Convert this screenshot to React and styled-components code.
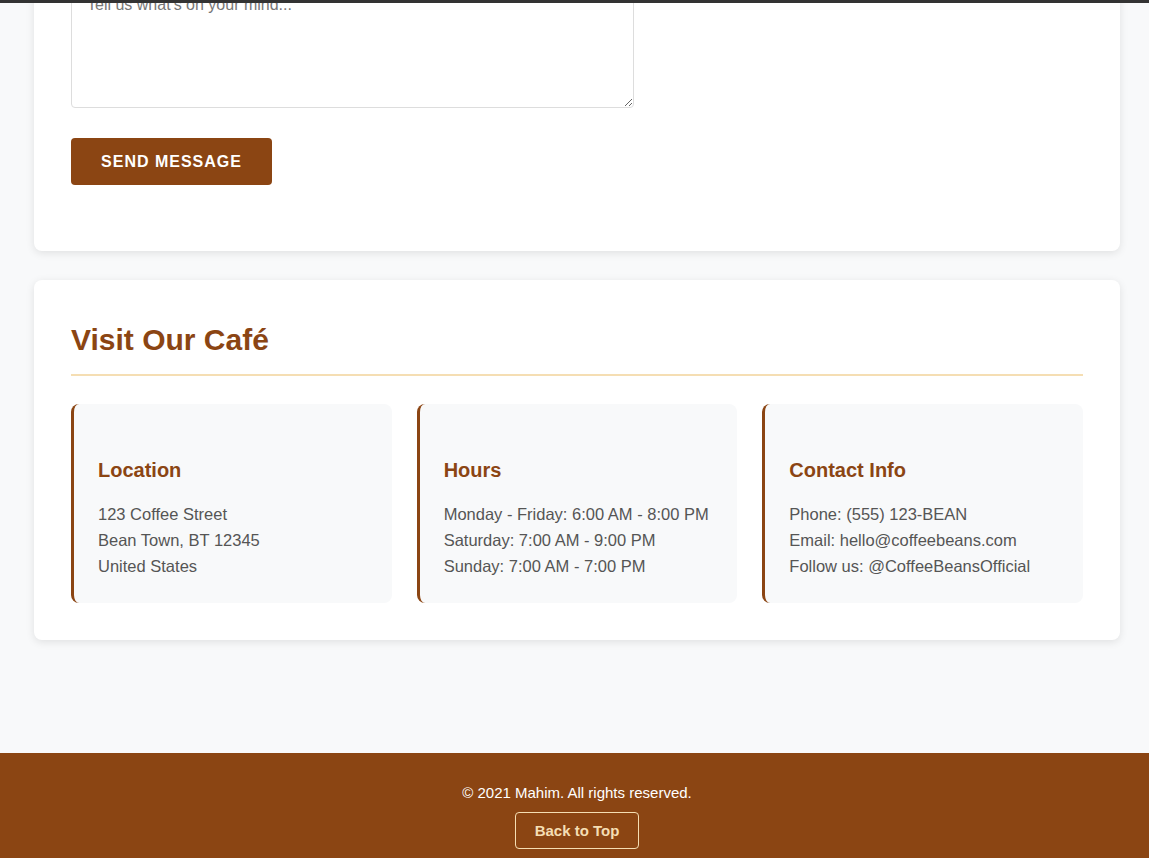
import React from 'react';
import styled, { createGlobalStyle } from 'styled-components';

const Global = createGlobalStyle`
  html, body {
    margin: 0;
    padding: 0;
    background: #f8f9fa;
    font-family: 'Liberation Sans', Arial, sans-serif;
  }
  * { box-sizing: border-box; }
`;

const TopEdge = styled.div`
  position: fixed;
  top: 0;
  left: 0;
  right: 0;
  height: 3px;
  background: #333;
  z-index: 10;
`;

const Main = styled.main`
  padding: 0 29px 113px 34px;
  display: flex;
  flex-direction: column;
  gap: 29px;
`;

const Card = styled.section`
  background: #fff;
  border-radius: 8px;
  box-shadow: 0 2px 8px rgba(0, 0, 0, 0.1);
  padding: 37px 37px ${p => p.$bottom || 37}px;
  margin-top: ${p => p.$offset || 0}px;
`;

const TextArea = styled.textarea`
  display: block;
  width: 563px;
  height: 125px;
  padding: 12px 15px;
  border: 1px solid #ddd;
  border-radius: 4px;
  font-family: 'Liberation Sans', Arial, sans-serif;
  font-size: 16px;
  color: #333;
  resize: vertical;
  &::placeholder { color: #777; }
`;

const SendButton = styled.button`
  margin-top: 30px;
  width: 201px;
  height: 47px;
  border: none;
  border-radius: 4px;
  background: #8b4513;
  color: #fff;
  font-family: 'Liberation Sans', Arial, sans-serif;
  font-size: 16px;
  font-weight: bold;
  letter-spacing: 1px;
  text-transform: uppercase;
  cursor: pointer;
`;

const Title = styled.h2`
  margin: 0 0 28px;
  padding: 6px 0 17px;
  font-size: 30px;
  line-height: 34px;
  font-weight: bold;
  color: #8b4513;
  border-bottom: 2px solid #f5deb3;
`;

const InfoGrid = styled.div`
  display: grid;
  grid-template-columns: repeat(3, 1fr);
  gap: 25px;
`;

const InfoCard = styled.div`
  background: #f8f9fa;
  border-left: 3px solid #8b4513;
  border-radius: 8px;
  padding: 55px 24px 24px;
  min-height: 199px;

  h3 {
    margin: 0 0 19px;
    font-size: 20px;
    font-weight: bold;
    color: #8b4513;
  }
  p {
    margin: 0;
    font-size: 16.5px;
    line-height: 26px;
    color: #555;
  }
`;

const Footer = styled.footer`
  background: #8b4513;
  color: #fff;
  text-align: center;
  padding: 31px 29px 30px 34px;

  p {
    margin: 0 0 11px;
    font-size: 15px;
  }
`;

const TopButton = styled.button`
  background: transparent;
  border: 1px solid #f5deb3;
  border-radius: 4px;
  color: #f5deb3;
  font-family: 'Liberation Sans', Arial, sans-serif;
  font-size: 15px;
  font-weight: bold;
  height: 37px;
  padding: 0 19px;
  cursor: pointer;
`;

const info = [
  { title: 'Location', lines: ['123 Coffee Street', 'Bean Town, BT 12345', 'United States'] },
  { title: 'Hours', lines: ['Monday - Friday: 6:00 AM - 8:00 PM', 'Saturday: 7:00 AM - 9:00 PM', 'Sunday: 7:00 AM - 7:00 PM'] },
  { title: 'Contact Info', lines: ['Phone: (555) 123-BEAN', 'Email: hello@coffeebeans.com', 'Follow us: @CoffeeBeansOfficial'] },
];

const App = () => {
  return (
    <>
      <Global />
      <TopEdge />
      <Main>
        <Card $offset={-54} $bottom={66}>
          <TextArea placeholder="Tell us what's on your mind..." />
          <SendButton>Send Message</SendButton>
        </Card>
        <Card>
          <Title>Visit Our Café</Title>
          <InfoGrid>
            {info.map(item => (
              <InfoCard key={item.title}>
                <h3>{item.title}</h3>
                {item.lines.map(line => <p key={line}>{line}</p>)}
              </InfoCard>
            ))}
          </InfoGrid>
        </Card>
      </Main>
      <Footer>
        <p>© 2021 Mahim. All rights reserved.</p>
        <TopButton>Back to Top</TopButton>
      </Footer>
    </>
  );
};

export default App;
